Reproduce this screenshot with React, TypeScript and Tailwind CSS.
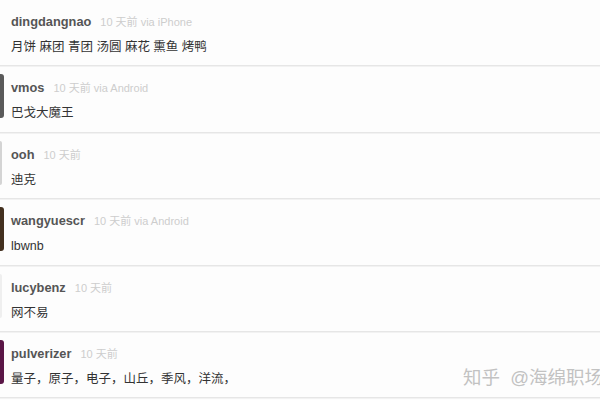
import React from "react";

type Row = {
  name: string;
  meta: string;
  text: string;
  avatar: string | null;
  visible: number;
};

const rows: Row[] = [
  { name: "dingdangnao", meta: "10 天前 via iPhone", text: "月饼 麻团 青团 汤圆 麻花 熏鱼 烤鸭", avatar: null, visible: 0 },
  { name: "vmos", meta: "10 天前 via Android", text: "巴戈大魔王", avatar: "bg-[#5a5a5a]", visible: 4 },
  { name: "ooh", meta: "10 天前", text: "迪克", avatar: "bg-[#d4d4d4]", visible: 2 },
  { name: "wangyuescr", meta: "10 天前 via Android", text: "lbwnb", avatar: "bg-[#43301f]", visible: 4 },
  { name: "lucybenz", meta: "10 天前", text: "网不易", avatar: "bg-[#efefef]", visible: 2 },
  { name: "pulverizer", meta: "10 天前", text: "量子，原子，电子，山丘，季风，洋流，", avatar: "bg-[#5a1646]", visible: 4 },
];

export default function App() {
  return (
    <div
      className="relative w-[600px] h-[400px] overflow-hidden bg-[#fdfdfd]"
      style={{ fontFamily: '"Liberation Sans", "Noto Sans CJK SC", sans-serif' }}
    >
      <div className="flex flex-col">
        {rows.map((r, i) => (
          <div
            key={i}
            className="flex items-start h-[66.4px] border-b border-[#e6e6e6] shadow-[0_1px_0_#f2f2f2]"
          >
            <div className="w-[11px] shrink-0 flex justify-start">
              {r.avatar ? (
                <div
                  className={`mt-[8px] h-[44px] rounded-r-[3px] ${r.avatar}`}
                  style={{ width: r.visible }}
                />
              ) : null}
            </div>
            <div className="flex flex-col pt-[14px]">
              <div className="flex items-baseline h-[16px] leading-[16px]">
                <span className="text-[12.8px] font-bold text-[#555555]">{r.name}</span>
                <span className="ml-[9px] text-[11px] text-[#cdcdcd]">{r.meta}</span>
              </div>
              <div className="mt-[7px] h-[20px] leading-[20px] text-[12.5px] text-[#333333] whitespace-pre">
                {r.text}
              </div>
            </div>
          </div>
        ))}
      </div>
      <div
        className="absolute left-[463px] top-[365px] whitespace-nowrap text-[18.5px] leading-[26px] text-[#c2c2c2]"
        style={{ textShadow: "0 0 2px #ffffff" }}
      >
        知乎&nbsp;&nbsp;@海绵职场
      </div>
    </div>
  );
}
